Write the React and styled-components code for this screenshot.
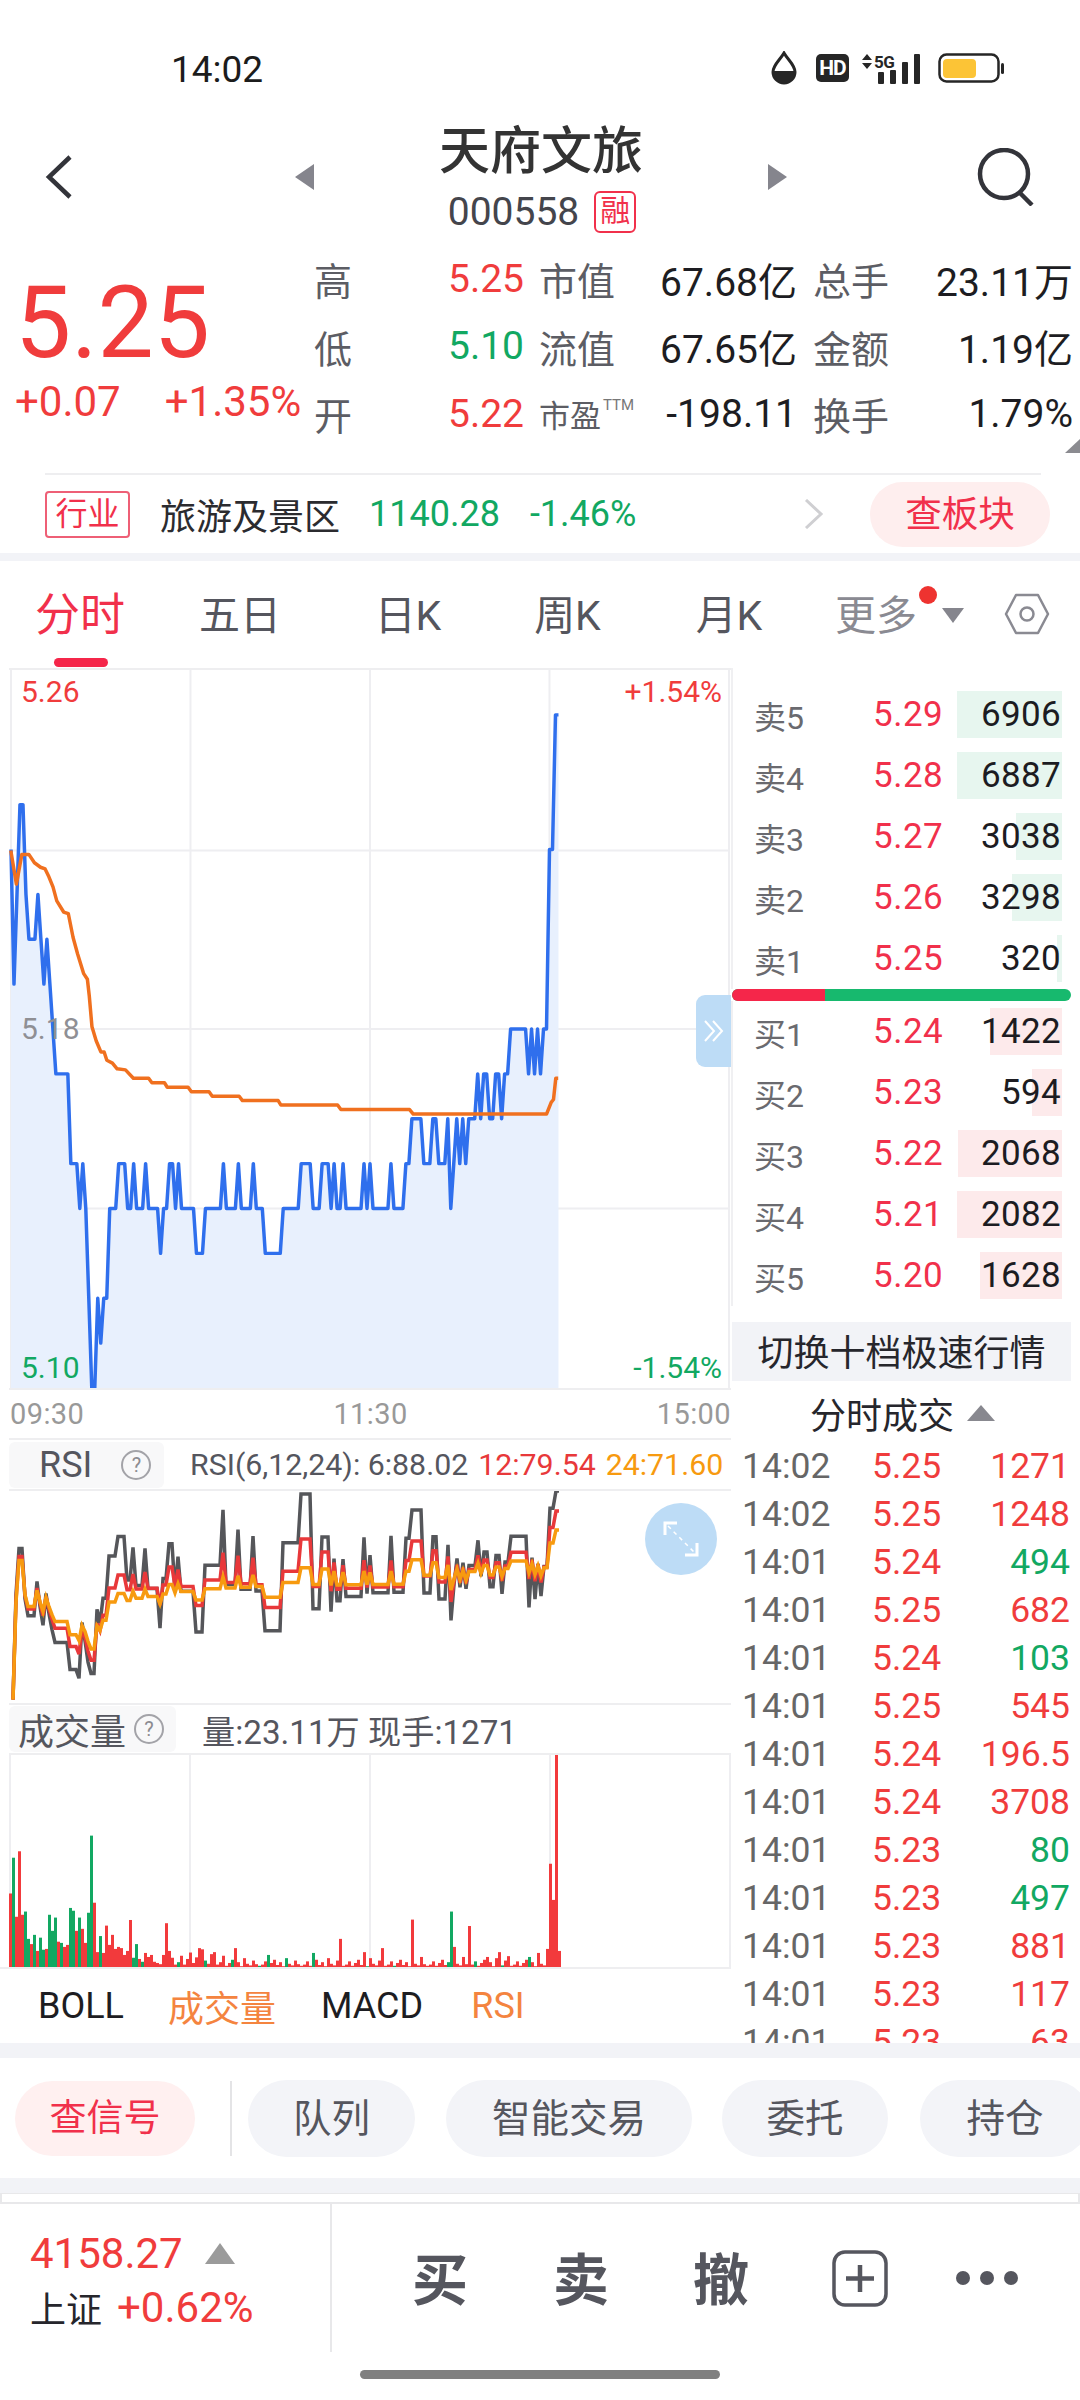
import React from "react";
import styled, { createGlobalStyle } from "styled-components";

const RED = "#f03c3c";
const PINK = "#f1304b";
const GREEN = "#12a862";
const SLATE = "#55565e";

const GlobalStyle = createGlobalStyle`
  html, body { margin: 0; padding: 0; background: #fff; }
  * { box-sizing: border-box; }
  body { font-family: Roboto, "Noto Sans CJK SC", sans-serif; }
`;

const Page = styled.div`
  width: 1080px;
  height: 2400px;
  overflow: hidden;
  display: flex;
  flex-direction: column;
  background: #fff;
  color: #222;
`;

const StatusBar = styled.div`
  height: 108px;
  padding: 30px 76px 0 171px;
  display: flex;
  align-items: center;
  justify-content: space-between;
  flex: none;
`;
const Clock = styled.div`
  font-size: 37px;
  color: #1c1c1c;
`;
const StatusIcons = styled.div`
  display: flex;
  align-items: center;
  gap: 16px;
  margin-top: -2px;
`;
const HdBadge = styled.div`
  width: 33px;
  height: 28px;
  margin: 0 -4px 0 3px;
  border-radius: 5px;
  background: #262626;
  color: #fff;
  font-size: 21px;
  font-weight: 700;
  letter-spacing: -1px;
  display: flex;
  align-items: center;
  justify-content: center;
`;

const Header = styled.div`
  height: 132px;
  flex: none;
  padding-top: 6px;
  display: grid;
  grid-template-columns: 294px 21px 452px 21px 292px;
  align-items: center;
`;
const BackCell = styled.div`
  padding-left: 43px;
  display: flex;
`;
const SearchCell = styled.div`
  padding-right: 44px;
  display: flex;
  justify-content: flex-end;
`;
const TitleBlock = styled.div`
  display: flex;
  flex-direction: column;
  align-items: center;
  padding-top: 3px;
`;
const Title = styled.div`
  font-size: 51px;
  line-height: 60px;
  font-weight: 500;
  color: #333;
`;
const CodeRow = styled.div`
  margin-top: 7px;
  height: 46px;
  display: flex;
  align-items: center;
  gap: 15px;
  padding-left: 2px;
`;
const Code = styled.div`
  font-size: 39px;
  color: #44454c;
`;
const MarginBadge = styled.div`
  width: 42px;
  height: 42px;
  border: 2px solid ${PINK};
  border-radius: 6px;
  color: ${PINK};
  font-size: 30px;
  line-height: 36px;
  text-align: center;
`;

const Quote = styled.div`
  position: relative;
  height: 233px;
  flex: none;
  display: flex;
`;
const PriceBlock = styled.div`
  width: 314px;
  padding: 33px 0 0 15px;
  flex: none;
`;
const BigPrice = styled.div`
  font-size: 100px;
  line-height: 100px;
  color: ${RED};
`;
const PriceChange = styled.div`
  margin-top: 4px;
  display: flex;
  gap: 44px;
  font-size: 42px;
  line-height: 50px;
  color: ${RED};
`;
const Stats = styled.div`
  margin-top: 5px;
  display: grid;
  grid-template-columns: 136px 89px 127px 147px 125px 135px;
  grid-auto-rows: 67.5px;
  align-items: center;
`;
const StatLabel = styled.div`
  font-size: ${(p) => p.$size || 38}px;
  color: #5c5d64;
  white-space: nowrap;
`;
const StatValue = styled.div`
  font-size: 39px;
  color: ${(p) => p.$color || "#1d1d22"};
  text-align: ${(p) => (p.$right ? "right" : "left")};
  padding-right: ${(p) => p.$pad || 0}px;
  margin-left: ${(p) => (p.$right ? -10 : -2)}px;
  white-space: nowrap;
`;
const Sup = styled.sup`
  font-size: 15px;
  color: #777;
  margin-left: 2px;
  vertical-align: 17px;
  line-height: 0;
`;
const Corner = styled.div`
  position: absolute;
  right: 0;
  bottom: 20px;
  width: 0;
  height: 0;
  border-left: 15px solid transparent;
  border-bottom: 14px solid #8b8b90;
`;

const Rule = styled.div`
  height: 2px;
  flex: none;
  margin: 0 39px 0 45px;
  background: #eeeef0;
`;
const Sector = styled.div`
  height: 78px;
  flex: none;
  display: flex;
  align-items: center;
  padding: 0 30px 0 45px;
`;
const SectorTag = styled.div`
  width: 85px;
  height: 47px;
  border: 2px solid #ee5f76;
  border-radius: 4px;
  color: ${PINK};
  font-size: 32px;
  line-height: 43px;
  text-align: center;
`;
const SectorName = styled.div`
  margin-left: 30px;
  font-size: 36px;
  color: #2b2b2f;
`;
const SectorNum = styled.div`
  margin-left: ${(p) => p.$gap}px;
  font-size: 36px;
  color: ${GREEN};
`;
const SectorArrow = styled.div`
  margin-left: auto;
  margin-right: 46px;
  display: flex;
`;
const BoardButton = styled.div`
  width: 180px;
  height: 65px;
  border-radius: 33px;
  background: #feeeee;
  color: ${PINK};
  font-size: 36.5px;
  line-height: 65px;
  text-align: center;
`;

const Band = styled.div`
  height: ${(p) => p.$h}px;
  flex: none;
  background: #f2f3f7;
`;

const Tabs = styled.div`
  height: 107px;
  flex: none;
  display: flex;
`;
const Tab = styled.div`
  position: relative;
  width: ${(p) => p.$w}px;
  padding-top: 30px;
  text-align: center;
  font-size: ${(p) => (p.$active ? 45 : 41)}px;
  line-height: 50px;
  color: ${(p) => (p.$active ? PINK : p.$muted ? "#8a8a92" : SLATE)};
  white-space: nowrap;
`;
const TabMark = styled.div`
  position: absolute;
  left: 54px;
  top: 97px;
  width: 54px;
  height: 9px;
  border-radius: 5px;
  background: #f5264a;
`;
const TabDot = styled.div`
  position: absolute;
  left: 100px;
  top: 25px;
  width: 18px;
  height: 18px;
  border-radius: 50%;
  background: #ee3330;
`;
const MoreCaret = styled.div`
  position: absolute;
  left: 123px;
  top: 47px;
  width: 0;
  height: 0;
  border-left: 11px solid transparent;
  border-right: 11px solid transparent;
  border-top: 15px solid #85858d;
`;
const SettingCell = styled.div`
  margin-left: 71px;
  padding-top: 32px;
  display: flex;
`;

const Main = styled.div`
  height: 1375px;
  flex: none;
  display: flex;
`;
const LeftColumn = styled.div`
  width: 731px;
  flex: none;
  padding-left: 9px;
  display: flex;
  flex-direction: column;
`;
const RightColumn = styled.div`
  width: 349px;
  flex: none;
  display: flex;
  flex-direction: column;
  overflow: hidden;
`;

const PriceChart = styled.div`
  position: relative;
  width: 722px;
  height: 722px;
  flex: none;
  border-top: 2px solid #eeeef0;
  border-bottom: 2px solid #eeeef0;
`;
const ChartSvg = styled.svg`
  display: block;
  overflow: hidden;
`;
const ChartTag = styled.div`
  position: absolute;
  font-size: 30px;
  line-height: 32px;
  color: ${(p) => p.$color};
  ${(p) => (p.$right ? "right: 9px;" : "left: 12px;")}
  ${(p) => (p.$bottom !== undefined ? `bottom: ${p.$bottom}px;` : `top: ${p.$top}px;`)}
`;
const Handle = styled.div`
  position: absolute;
  right: 0;
  top: 325px;
  width: 35px;
  height: 72px;
  border-radius: 9px 0 0 9px;
  background: #bddcf6;
  display: flex;
  align-items: center;
  justify-content: center;
`;
const TimeAxis = styled.div`
  height: 48px;
  flex: none;
  padding: 0 0 0 1px;
  display: flex;
  align-items: center;
  justify-content: space-between;
  font-size: 29px;
  color: #999;
  letter-spacing: 0.4px;
`;
const PanelHead = styled.div`
  height: ${(p) => p.$h}px;
  flex: none;
  display: flex;
  align-items: center;
  border-top: 2px solid #eeeef0;
`;
const PanelTab = styled.div`
  width: ${(p) => p.$w}px;
  height: 46px;
  flex: none;
  display: flex;
  align-items: center;
  padding-left: ${(p) => p.$pad}px;
  background: #f8f8f9;
  border-radius: 6px;
  font-size: ${(p) => p.$size}px;
  color: ${SLATE};
`;
const Help = styled.span`
  width: 30px;
  height: 30px;
  flex: none;
  margin-left: ${(p) => p.$gap}px;
  border: 2px solid #a3a3a8;
  border-radius: 50%;
  color: #8b8b90;
  font-size: 20px;
  line-height: 26px;
  text-align: center;
`;
const PanelInfo = styled.div`
  margin-left: ${(p) => p.$gap}px;
  font-size: ${(p) => p.$size}px;
  color: ${SLATE};
  white-space: nowrap;
`;
const InfoPart = styled.span`
  color: ${(p) => p.$color};
  margin-left: 10px;
`;
const SubChart = styled.div`
  position: relative;
  height: ${(p) => p.$h}px;
  flex: none;
  border-top: 2px solid #eeeef0;
`;
const ExpandButton = styled.div`
  position: absolute;
  left: 636px;
  top: 12px;
  width: 72px;
  height: 72px;
  border-radius: 50%;
  background: #bddcf6;
  display: flex;
  align-items: center;
  justify-content: center;
`;
const IndicatorTabs = styled.div`
  flex: 1;
  display: flex;
  align-items: center;
  margin-left: -9px;
  border-top: 2px solid #eeeef0;
`;
const IndicatorTab = styled.div`
  width: ${(p) => p.$w}px;
  flex: none;
  font-size: 36px;
  text-align: ${(p) => (p.$first ? "left" : "center")};
  padding-left: ${(p) => (p.$first ? 38 : 0)}px;
  color: ${(p) => (p.$active ? "#f4843f" : "#1d1d22")};
`;

const Book = styled.div`
  padding-top: ${(p) => p.$top}px;
  flex: none;
  border-left: 2px solid #f0f0f2;
`;
const BookRow = styled.div`
  position: relative;
  height: 61px;
  display: flex;
  align-items: center;
  padding: 0 19px 0 21px;
`;
const DepthBar = styled.div`
  position: absolute;
  right: 18px;
  top: 7px;
  height: 47px;
  background: ${(p) => (p.$buy ? "#fdeaeb" : "#e7f6ef")};
`;
const BookLabel = styled.div`
  position: relative;
  width: 119px;
  font-size: 32px;
  color: #6a6a6f;
`;
const BookPrice = styled.div`
  position: relative;
  font-size: 35px;
  letter-spacing: 0.5px;
  color: ${PINK};
`;
const BookQty = styled.div`
  position: relative;
  margin-left: auto;
  font-size: 35px;
  letter-spacing: 0.3px;
  color: #1c1c22;
`;
const Split = styled.div`
  height: 12px;
  margin: 0 9px 0 1px;
  flex: none;
  display: flex;
  border-radius: 6px;
  overflow: hidden;
  background: #17b96e;
`;
const SplitRed = styled.div`
  width: 93px;
  background: #f5264a;
`;
const SwitchButton = styled.div`
  margin: 16px 9px 0 1px;
  height: 59px;
  flex: none;
  background: #f2f3f7;
  color: #26262c;
  font-size: 36px;
  line-height: 64px;
  text-align: center;
`;
const TradesHead = styled.div`
  height: 60px;
  flex: none;
  padding-top: 4px;
  display: flex;
  align-items: center;
  justify-content: center;
  gap: 13px;
  padding-right: 6px;
  font-size: 36px;
  color: #26262c;
`;
const UpCaret = styled.div`
  width: 0;
  height: 0;
  border-left: 14px solid transparent;
  border-right: 14px solid transparent;
  border-bottom: 16px solid #88888f;
`;
const Trades = styled.div`
  flex: 1;
  overflow: hidden;
  padding-top: 1px;
`;
const TradeRow = styled.div`
  height: 48px;
  display: flex;
  align-items: center;
  padding: 0 10px 0 11px;
  font-size: 35.5px;
`;
const TradeTime = styled.div`
  width: 130px;
  color: #666;
`;
const TradePrice = styled.div`
  color: ${RED};
`;
const TradeQty = styled.div`
  margin-left: auto;
  color: ${(p) => (p.$down ? GREEN : RED)};
`;

const Actions = styled.div`
  height: 120px;
  flex: none;
  overflow: hidden;
  display: flex;
  align-items: center;
  padding-left: 15px;
`;
const SignalPill = styled.div`
  width: 180px;
  height: 75px;
  flex: none;
  border-radius: 38px;
  background: #fff0f0;
  color: ${PINK};
  font-size: 37px;
  line-height: 75px;
  text-align: center;
`;
const ActionDivider = styled.div`
  width: 2px;
  height: 75px;
  flex: none;
  margin: 0 16px 0 35px;
  background: #e4e4e6;
`;
const ActionPill = styled.div`
  width: ${(p) => p.$w}px;
  height: 77px;
  flex: none;
  margin-right: ${(p) => p.$gap}px;
  border-radius: 39px;
  background: #f3f4f8;
  color: ${SLATE};
  font-size: 38.5px;
  line-height: 77px;
  text-align: center;
`;
const Strip = styled.div`
  height: 11px;
  flex: none;
  border: 2px solid #e8e8ea;
  border-top-width: 1px;
  background: #fff;
`;
const Footer = styled.div`
  height: 148px;
  flex: none;
  display: flex;
`;
const IndexBlock = styled.div`
  width: 332px;
  flex: none;
  padding: 26px 0 0 30px;
  border-right: 2px solid #e8e8ea;
`;
const IndexRow = styled.div`
  display: flex;
  align-items: center;
  height: ${(p) => p.$h}px;
`;
const IndexValue = styled.div`
  font-size: 42px;
  color: ${RED};
`;
const IndexName = styled.div`
  font-size: 36px;
  color: #26262c;
  margin-right: 15px;
`;
const GrayTriangle = styled.div`
  margin-left: 22px;
  width: 0;
  height: 0;
  border-left: 15px solid transparent;
  border-right: 15px solid transparent;
  border-bottom: 21px solid #9b9b9b;
`;
const TradeActions = styled.div`
  flex: 1;
  padding: 46px 0 0 80px;
  display: flex;
  align-items: flex-start;
`;
const BigAction = styled.div`
  width: ${(p) => p.$w}px;
  flex: none;
  font-size: 56px;
  line-height: 62px;
  font-weight: 700;
  color: ${SLATE};
`;
const MoreDots = styled.div`
  margin: 21px 0 0 68px;
  display: flex;
  gap: 10px;
`;
const Dot = styled.div`
  width: 14px;
  height: 14px;
  border-radius: 50%;
  background: ${SLATE};
`;
const HomeRow = styled.div`
  flex: 1;
  padding-top: 18px;
  display: flex;
  justify-content: center;
`;
const HomeBar = styled.div`
  width: 360px;
  height: 9px;
  border-radius: 5px;
  background: #808080;
`;

// minute prices as hundredths above 5.10, one character per minute
const PRICE_CODES =
  "c9bddbaaaba9a98" + "77777" + "55545" + "42002122" + "444555" + "44" + "5" + "444" + "5" + "4444" + "3" + "44" + "55" +
  "4" + "5" + "44444" + "333" + "444444" + "5" + "4444" + "5" + "4444" + "5" + "444" + "333333" + "444444" + "5555" +
  "444" + "555" + "4" + "5" + "44" + "5" + "444444" + "5" + "4" + "5" + "444444" + "5" + "4444" + "55" + "6666" + "555" +
  "66" + "555" + "6" + "4" + "5" + "6" + "5" + "6" + "5" + "666" + "7" + "6" + "77" + "66" + "77" + "6" + "77" + "888888" +
  "7" + "8" + "7" + "8" + "7" + "88" + "cc" + "ff";
const levels = PRICE_CODES.split("").map((c) => parseInt(c, 36));

const xAt = (i) => 1 + i * 3;
const priceLine = levels.map((l, i) => `${xAt(i)},${720 - l * 45}`).join(" ");
const priceArea = `${xAt(0)},720 ${priceLine} ${xAt(levels.length - 1)},720`;

// average line, traced from the chart
const AVG = [
  [21, 515], [33, 575], [45, 522], [60, 522], [72, 537], [85, 545], [95, 548], [103, 562], [112, 580], [120, 605],
  [135, 625], [145, 628], [155, 670], [165, 700], [178, 735], [186, 745], [190, 775], [196, 830], [205, 855], [215, 875],
  [222, 875], [228, 890], [240, 895], [250, 905], [268, 907], [285, 922], [318, 922], [325, 930], [352, 930], [358, 938],
  [403, 938], [410, 946], [448, 946], [455, 954], [513, 954], [520, 962], [597, 962], [603, 970], [725, 970], [732, 978],
  [880, 978], [888, 986], [1175, 986], [1185, 965], [1190, 960], [1195, 922], [1200, 922],
];
const avgLine = AVG.map(([x, y]) => `${(x / 2.148 - 9).toFixed(1)},${(y / 1.782 - 108).toFixed(1)}`).join(" ");

const rsi = (n) => {
  let up = 0;
  let all = 0;
  let last = 0;
  const points = [];
  for (let i = 1; i < levels.length; i++) {
    const d = levels[i] - levels[i - 1];
    up = (Math.max(d, 0) + (n - 1) * up) / n;
    all = (Math.abs(d) + (n - 1) * all) / n;
    if (all > 0) last = (up / all) * 100;
    points.push(`${xAt(i)},${((88.02 - last) * 2.37).toFixed(1)}`);
  }
  return points.join(" ");
};

// bar tops in the first minutes, then a low noise with a few spikes
const VOL_TOPS = [
  ["r", 1152], ["g", 1063], ["r", 1210], ["r", 1047], ["r", 1205], ["g", 1197], ["g", 1265], ["r", 1278], ["g", 1255], ["r", 1295],
  ["g", 1262], ["g", 1292], ["r", 1290], ["g", 1205], ["g", 1245], ["g", 1212], ["r", 1272], ["g", 1275], ["r", 1285], ["r", 1280],
  ["g", 1188], ["g", 1195], ["r", 1245], ["g", 1212], ["r", 1240], ["r", 1275], ["g", 1200], ["g", 1008], ["r", 1175], ["r", 1298],
  ["g", 1258], ["r", 1300], ["r", 1232], ["r", 1280], ["r", 1255], ["r", 1290], ["r", 1285], ["r", 1288], ["r", 1305], ["r", 1295],
  ["r", 1218], ["g", 1312], ["g", 1278], ["r", 1315], ["g", 1322], ["r", 1300], ["r", 1310], ["r", 1305], ["r", 1322], ["r", 1325],
  ["r", 1328], ["r", 1305], ["r", 1226], ["r", 1295], ["r", 1312],
];
const VOL_SPIKES = {
  63: ["r", 1288], 68: ["r", 1298], 75: ["r", 1288], 86: ["g", 1305], 101: ["g", 1300], 110: ["r", 1265], 118: ["r", 1298],
  124: ["r", 1288], 134: ["r", 1217], 137: ["r", 1310], 147: ["g", 1197], 148: ["r", 1285], 151: ["r", 1310], 153: ["r", 1233],
  159: ["r", 1310], 163: ["r", 1298], 166: ["r", 1308], 173: ["g", 1310], 176: ["r", 1300], 179: ["r", 1290], 180: ["r", 1078],
  181: ["r", 1168], 182: ["r", 805], 183: ["r", 1295],
};
const NOISE = [6, 14, 3, 10, 18, 5, 12, 2, 22, 8, 4, 16, 7, 3];
const volumes = levels.map((_, i) => {
  const [kind, top] = VOL_TOPS[i] || VOL_SPIKES[i] || [i % 9 === 2 ? "g" : "r", 1335 - NOISE[i % NOISE.length] * (i < 72 ? 2 : 1)];
  return { kind, height: (1335 - top) / 2.489 };
});

const ASKS = [
  ["卖5", "5.29", "6906", 105],
  ["卖4", "5.28", "6887", 105],
  ["卖3", "5.27", "3038", 46],
  ["卖2", "5.26", "3298", 50],
  ["卖1", "5.25", "320", 5],
];
const BIDS = [
  ["买1", "5.24", "1422", 72],
  ["买2", "5.23", "594", 30],
  ["买3", "5.22", "2068", 104],
  ["买4", "5.21", "2082", 105],
  ["买5", "5.20", "1628", 82],
];
const TRADES = [
  ["14:02", "5.25", "1271"],
  ["14:02", "5.25", "1248"],
  ["14:01", "5.24", "494", true],
  ["14:01", "5.25", "682"],
  ["14:01", "5.24", "103", true],
  ["14:01", "5.25", "545"],
  ["14:01", "5.24", "196.5"],
  ["14:01", "5.24", "3708"],
  ["14:01", "5.23", "80", true],
  ["14:01", "5.23", "497", true],
  ["14:01", "5.23", "881"],
  ["14:01", "5.23", "117"],
  ["14:01", "5.23", "63"],
];

const Grid = ({ h, rows = [] }) => (
  <>
    {[1, 181, 361, 541, 721].map((x) => (
      <line key={x} x1={x} x2={x} y1="0" y2={h} stroke="#eeeef1" strokeWidth="2" />
    ))}
    {rows.map((y) => (
      <line key={y} x1="0" x2="722" y1={y} y2={y} stroke="#eeeef1" strokeWidth="2" />
    ))}
  </>
);

const DropIcon = () => (
  <svg width="26" height="34" viewBox="0 0 26 34">
    <path d="M13 2 C9 9 2 14 2 21 a11 11 0 0 0 22 0 C24 14 17 9 13 2 Z" fill="none" stroke="#262626" strokeWidth="3" />
    <path d="M2 20 h22 v1 a11 11 0 0 1 -22 0 Z" fill="#262626" />
  </svg>
);

const NetIcon = () => (
  <svg width="61" height="31" viewBox="0 0 61 31">
    <path d="M1 7 L6 1 L11 7 Z M1 10 L11 10 L6 16 Z" fill="#262626" />
    <text x="13" y="15" fontSize="17" fontWeight="700" fill="#262626" fontFamily="Roboto" letterSpacing="-0.5">5G</text>
    <rect x="17" y="19" width="6" height="12" rx="1" fill="#262626" />
    <rect x="29" y="17" width="6" height="14" rx="1" fill="#262626" />
    <rect x="41" y="9" width="6" height="22" rx="1" fill="#262626" />
    <rect x="53" y="1" width="6" height="30" rx="1" fill="#262626" />
  </svg>
);

const BatteryIcon = () => (
  <svg width="66" height="30" viewBox="0 0 66 30">
    <rect x="1.5" y="1.5" width="59" height="27" rx="7" fill="none" stroke="#262626" strokeWidth="2.5" />
    <rect x="5" y="6" width="33" height="19" rx="4" fill="#fcc436" />
    <rect x="63" y="10" width="3" height="11" rx="1.5" fill="#262626" />
  </svg>
);

const SideArrow = ({ flip }) => (
  <svg width="21" height="28" viewBox="0 0 21 28">
    <path d={flip ? "M1 1 L20 14 L1 27 Z" : "M20 1 L1 14 L20 27 Z"} fill="#85858d" strokeLinejoin="round" />
  </svg>
);

const HexIcon = () => (
  <svg width="46" height="42" viewBox="0 0 46 42">
    <path d="M12 2 H34 L44 21 L34 40 H12 L2 21 Z" fill="none" stroke="#8a8a92" strokeWidth="2.5" strokeLinejoin="round" />
    <circle cx="23" cy="21" r="6.5" fill="none" stroke="#8a8a92" strokeWidth="2.5" />
  </svg>
);

const Book5 = ({ rows, buy }) =>
  rows.map(([label, price, qty, bar]) => (
    <BookRow key={label}>
      <DepthBar $buy={buy} style={{ width: bar }} />
      <BookLabel>{label}</BookLabel>
      <BookPrice>{price}</BookPrice>
      <BookQty>{qty}</BookQty>
    </BookRow>
  ));

export default function App() {
  return (
    <Page>
      <GlobalStyle />
      <StatusBar>
        <Clock>14:02</Clock>
        <StatusIcons>
          <DropIcon />
          <HdBadge>HD</HdBadge>
          <NetIcon />
          <BatteryIcon />
        </StatusIcons>
      </StatusBar>

      <Header>
        <BackCell>
          <svg width="32" height="46" viewBox="0 0 32 46">
            <path d="M27 3 L6 23 L27 43" fill="none" stroke="#33343a" strokeWidth="4.5" />
          </svg>
        </BackCell>
        <SideArrow />
        <TitleBlock>
          <Title>天府文旅</Title>
          <CodeRow>
            <Code>000558</Code>
            <MarginBadge>融</MarginBadge>
          </CodeRow>
        </TitleBlock>
        <SideArrow flip />
        <SearchCell>
          <svg width="60" height="58" viewBox="0 0 60 58">
            <circle cx="28" cy="26" r="24" fill="none" stroke="#33343a" strokeWidth="4.5" />
            <path d="M43 44 L56 57" stroke="#33343a" strokeWidth="4.5" fill="none" />
          </svg>
        </SearchCell>
      </Header>

      <Quote>
        <PriceBlock>
          <BigPrice>5.25</BigPrice>
          <PriceChange>
            <span>+0.07</span>
            <span>+1.35%</span>
          </PriceChange>
        </PriceBlock>
        <Stats>
          <StatLabel>高</StatLabel>
          <StatValue $color={RED}>5.25</StatValue>
          <StatLabel>市值</StatLabel>
          <StatValue $right $pad={16}>67.68亿</StatValue>
          <StatLabel>总手</StatLabel>
          <StatValue $right>23.11万</StatValue>

          <StatLabel>低</StatLabel>
          <StatValue $color={GREEN}>5.10</StatValue>
          <StatLabel>流值</StatLabel>
          <StatValue $right $pad={16}>67.65亿</StatValue>
          <StatLabel>金额</StatLabel>
          <StatValue $right>1.19亿</StatValue>

          <StatLabel>开</StatLabel>
          <StatValue $color={RED}>5.22</StatValue>
          <StatLabel $size={31}>市盈<Sup>TTM</Sup></StatLabel>
          <StatValue $right $pad={16}>-198.11</StatValue>
          <StatLabel>换手</StatLabel>
          <StatValue $right>1.79%</StatValue>
        </Stats>
        <Corner />
      </Quote>

      <Rule />
      <Sector>
        <SectorTag>行业</SectorTag>
        <SectorName>旅游及景区</SectorName>
        <SectorNum $gap={29}>1140.28</SectorNum>
        <SectorNum $gap={30}>-1.46%</SectorNum>
        <SectorArrow>
          <svg width="20" height="30" viewBox="0 0 20 30">
            <path d="M2 1 L17 15 L2 29" fill="none" stroke="#cfcfd2" strokeWidth="3" />
          </svg>
        </SectorArrow>
        <BoardButton>查板块</BoardButton>
      </Sector>
      <Band $h={8} />

      <Tabs>
        <Tab $w={160} $active>
          分时
          <TabMark />
        </Tab>
        <Tab $w={160}>五日</Tab>
        <Tab $w={176}>日K</Tab>
        <Tab $w={143}>周K</Tab>
        <Tab $w={180}>月K</Tab>
        <Tab $w={114} $muted>
          更多
          <TabDot />
          <MoreCaret />
        </Tab>
        <SettingCell>
          <HexIcon />
        </SettingCell>
      </Tabs>

      <Main>
        <LeftColumn>
          <PriceChart>
            <ChartSvg width="722" height="718" viewBox="0 0 722 720">
              <Grid h={720} rows={[181, 360, 540]} />
              <polygon points={priceArea} fill="#e8f0fd" />
              <polyline points={priceLine} fill="none" stroke="#2f6fed" strokeWidth="3.5" strokeLinejoin="round" />
              <polyline points={avgLine} fill="none" stroke="#f0701f" strokeWidth="3.5" strokeLinejoin="round" />
            </ChartSvg>
            <ChartTag $top={6} $color={RED}>5.26</ChartTag>
            <ChartTag $top={6} $right $color={RED}>+1.54%</ChartTag>
            <ChartTag $top={343} $color="#8f8f94">5.18</ChartTag>
            <ChartTag $bottom={4} $color={GREEN}>5.10</ChartTag>
            <ChartTag $bottom={4} $right $color={GREEN}>-1.54%</ChartTag>
            <Handle>
              <svg width="22" height="24" viewBox="0 0 22 24">
                <path d="M2 2 L11 12 L2 22 M10 2 L19 12 L10 22" fill="none" stroke="#fff" strokeWidth="2" />
              </svg>
            </Handle>
          </PriceChart>
          <TimeAxis>
            <span>09:30</span>
            <span>11:30</span>
            <span>15:00</span>
          </TimeAxis>

          <PanelHead $h={51}>
            <PanelTab $w={155} $pad={30} $size={36}>
              RSI
              <Help $gap={29}>?</Help>
            </PanelTab>
            <PanelInfo $gap={26} $size={30.3}>
              RSI(6,12,24): 6:88.02
              <InfoPart $color="#e8383a">12:79.54</InfoPart>
              <InfoPart $color="#f79a0f">24:71.60</InfoPart>
            </PanelInfo>
          </PanelHead>
          <SubChart $h={214}>
            <ChartSvg width="722" height="212" viewBox="0 0 722 212">
              <polyline points={rsi(6)} fill="none" stroke="#55565a" strokeWidth="3.5" />
              <polyline points={rsi(12)} fill="none" stroke="#e8383a" strokeWidth="3.5" />
              <polyline points={rsi(24)} fill="none" stroke="#f79a0f" strokeWidth="3.5" />
            </ChartSvg>
            <ExpandButton>
              <svg width="36" height="36" viewBox="0 0 36 36">
                <path d="M14 2 H2 V14 M22 34 H34 V22" fill="none" stroke="#fff" strokeWidth="3" />
                <path d="M5 5 L31 31" stroke="#fff" strokeWidth="1.5" strokeDasharray="4 4" />
              </svg>
            </ExpandButton>
          </SubChart>

          <PanelHead $h={50}>
            <PanelTab $w={167} $pad={9} $size={36}>
              成交量
              <Help $gap={8}>?</Help>
            </PanelTab>
            <PanelInfo $gap={26} $size={33.2}>量:23.11万 现手:1271</PanelInfo>
          </PanelHead>
          <SubChart $h={214}>
            <ChartSvg width="722" height="212" viewBox="0 0 722 212">
              <Grid h={212} />
              {volumes.map((v, i) => (
                <rect key={i} x={i * 3} y={212 - v.height} width="3" height={v.height} fill={v.kind === "g" ? GREEN : "#f23a3c"} />
              ))}
            </ChartSvg>
          </SubChart>

          <IndicatorTabs>
            <IndicatorTab $w={148} $first>BOLL</IndicatorTab>
            <IndicatorTab $w={148} $active>成交量</IndicatorTab>
            <IndicatorTab $w={152}>MACD</IndicatorTab>
            <IndicatorTab $w={100} $active>RSI</IndicatorTab>
          </IndicatorTabs>
        </LeftColumn>

        <RightColumn>
          <Book $top={16}>
            <Book5 rows={ASKS} />
          </Book>
          <Split>
            <SplitRed />
          </Split>
          <Book $top={0}>
            <Book5 rows={BIDS} buy />
          </Book>
          <SwitchButton>切换十档极速行情</SwitchButton>
          <TradesHead>
            分时成交
            <UpCaret />
          </TradesHead>
          <Trades>
            {TRADES.map(([time, price, qty, down], i) => (
              <TradeRow key={i}>
                <TradeTime>{time}</TradeTime>
                <TradePrice>{price}</TradePrice>
                <TradeQty $down={down}>{qty}</TradeQty>
              </TradeRow>
            ))}
          </Trades>
        </RightColumn>
      </Main>

      <Band $h={15} />
      <Actions>
        <SignalPill>查信号</SignalPill>
        <ActionDivider />
        <ActionPill $w={167} $gap={31}>队列</ActionPill>
        <ActionPill $w={246} $gap={30}>智能交易</ActionPill>
        <ActionPill $w={166} $gap={32}>委托</ActionPill>
        <ActionPill $w={170} $gap={0}>持仓</ActionPill>
      </Actions>
      <Band $h={15} />
      <Strip />

      <Footer>
        <IndexBlock>
          <IndexRow $h={46}>
            <IndexValue>4158.27</IndexValue>
            <GrayTriangle />
          </IndexRow>
          <IndexRow $h={62}>
            <IndexName>上证</IndexName>
            <IndexValue>+0.62%</IndexValue>
          </IndexRow>
        </IndexBlock>
        <TradeActions>
          <BigAction $w={141}>买</BigAction>
          <BigAction $w={140}>卖</BigAction>
          <BigAction $w={139}>撤</BigAction>
          <svg width="56" height="57" viewBox="0 0 56 57">
            <rect x="2" y="2" width="52" height="53" rx="11" fill="none" stroke={SLATE} strokeWidth="3.5" />
            <path d="M28 15 V42 M14 28.5 H42" stroke={SLATE} strokeWidth="4.5" />
          </svg>
          <MoreDots>
            <Dot />
            <Dot />
            <Dot />
          </MoreDots>
        </TradeActions>
      </Footer>
      <HomeRow>
        <HomeBar />
      </HomeRow>
    </Page>
  );
}
